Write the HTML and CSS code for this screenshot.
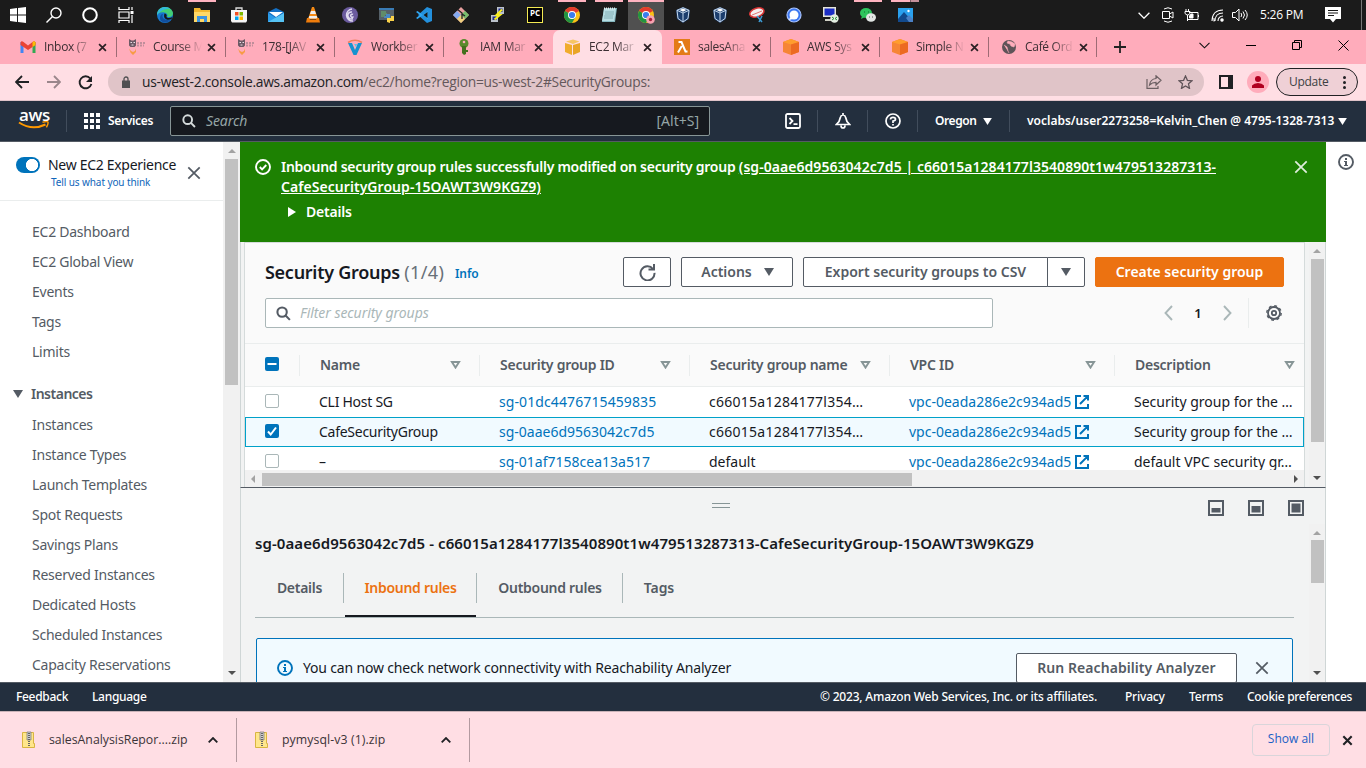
FILE: index.html
```html
<!DOCTYPE html>
<html lang="en">
<head>
<meta charset="utf-8">
<title>EC2 Management Console</title>
<link rel="stylesheet" href="styles.css">
</head>
<body>
<svg class="defs" width="0" height="0">
  <symbol id="x" viewBox="0 0 10 10"><path d="M1.2 1.2l7.6 7.6M8.8 1.2L1.2 8.8" fill="none" stroke="currentColor" stroke-width="1.9"/></symbol>
  <symbol id="close" viewBox="0 0 16 16"><path d="M1.5 1.5l13 13M14.5 1.5l-13 13" fill="none" stroke="currentColor" stroke-width="2"/></symbol>
  <symbol id="down" viewBox="0 0 10 8"><path d="M0 0h10L5 8z" fill="currentColor"/></symbol>
  <symbol id="sort" viewBox="0 0 10 8"><path d="M1.4 1h7.2L5 6.6z" fill="none" stroke="#879596" stroke-width="1.9"/></symbol>
  <symbol id="search" viewBox="0 0 16 16"><circle cx="6.5" cy="6.5" r="5" fill="none" stroke="currentColor" stroke-width="2.200"/><path d="M10.2 10.2l4.6 4.6" stroke="currentColor" stroke-width="2.200"/></symbol>
  <symbol id="ext" viewBox="0 0 14 14"><path d="M6 1H1v12h12V9M8.5 1H13v4.500M12.600 1.400L5 9" fill="none" stroke="#0073bb" stroke-width="2"/></symbol>
  <symbol id="info" viewBox="0 0 16 16"><circle cx="8" cy="8" r="7" fill="none" stroke="currentColor" stroke-width="1.9"/><path d="M7 4h2v2H7zM6 7h3v4h1v1H6v-1h1V8H6z" fill="currentColor"/></symbol>
  <symbol id="chrome" viewBox="0 0 16 16"><circle cx="8" cy="8" r="8" fill="#fbc116"/><path d="M8 8L1.070 4A8 8 0 0 1 14.930 4z" fill="#e33b2e"/><path d="M8 8L1.070 4A8 8 0 0 0 8 16l3.500-6z" fill="#229342"/><circle cx="8" cy="8" r="4" fill="#fff"/><circle cx="8" cy="8" r="3.100" fill="#3b7ded"/></symbol>
  <symbol id="cube" viewBox="0 0 16 16"><path d="M8 0l8 3v10l-8 3-8-3V3z" fill="#f68536"/><path d="M0 3l8 2.500L16 3 8 0z" fill="#ff9d2e"/><path d="M8 5.500L16 3v10l-8 3z" fill="#ec6a22"/></symbol>
  <symbol id="vbox" viewBox="0 0 14 16"><path d="M7 0l7 3-1 9-6 4-6-4-1-9z" fill="#1c3e6e"/><path d="M1 3.300l6 2.700 6-2.700M7 6v9M7 .7l6 2.600-1 8.200-5 3.500-5-3.500L1 3.300z" fill="none" stroke="#c5d8ec" stroke-width="1"/><path d="M3.500 3L7 1.500 10.500 3 7 4.700z" fill="#fff"/></symbol>
  <symbol id="cat" viewBox="0 0 16 16"><path d="M0 0l2.500 1.500h2L7 0v6.500L5.500 8h-4L0 6.500z" fill="#6d5a66"/><path d="M8 4h8M8 6.500h7" stroke="#c08d9a" stroke-width="2" stroke-dasharray="2 1"/><path d="M0 9.500l1.500 4L4 16l3-3V9.500l-1 2.500-2 1-2-1z" fill="#f79b45"/><path d="M1.500 3.500h1.500M4.500 3.500H6M2.500 6h2" stroke="#e9dfe4"/></symbol>
  <symbol id="zip" viewBox="0 0 14 18"><path d="M.5 1.500h11v11h1v4H.5z" fill="#ffe68c" stroke="#d9b541"/><path d="M5 1h4v8H5z" fill="#ccc" stroke="#777" stroke-width=".7"/><path d="M7 2v14" stroke="#666" stroke-width="2" stroke-dasharray="1 1"/></symbol>
  <symbol id="up" viewBox="0 0 10 6"><path d="M.7 5.300L5 1l4.300 4.300" fill="none" stroke="currentColor" stroke-width="1.800"/></symbol>
</svg>

<div class="taskbar">
  <div class="sys"><svg width="16" height="16" viewBox="0 0 16 16"><path fill="#fff" d="M0 2l7-1v6.500H0zM8 1l8-1v7.500H8zM0 8.500h7V15l-7-1zM8 8.500h8V16l-8-1z"/></svg></div>
  <div class="sys"><svg width="16" height="16" viewBox="0 0 16 16" fill="none" stroke="#fff" stroke-width="1.400"><circle cx="10" cy="6" r="5"/><path d="M6.500 9.500L.5 15.500"/></svg></div>
  <div class="sys"><svg width="16" height="16" viewBox="0 0 16 16"><circle cx="8" cy="8" r="6.800" fill="none" stroke="#fff" stroke-width="2"/></svg></div>
  <div class="sys"><svg width="16" height="16" viewBox="0 0 16 16" fill="none" stroke="#fff" stroke-width="1.200"><path d="M1 0v2.500h10V0M1 5h10v6H1zM1 16v-2.500h10V16M14 0v3M14 8v8"/><path d="M12.500 5.500h3" stroke-width="3"/></svg></div>
  <div class="app first"><svg width="16" height="16" viewBox="0 0 16 16"><circle cx="8" cy="8" r="8" fill="#1678cf"/><path d="M0 7C1 1 5 0 8 0c5 0 8 3.500 8 6.500 0 3-3 4-6 3.500 1-1 1-4-3-4.500C4 5 1 6 0 8z" fill="#42ce76"/><path d="M0 7C1 2 5 0 8 0c2 0 4 .7 5.300 2C9 1 4 3 0 8z" fill="#32b8dd"/><path d="M6 7c-2 4 2 7 8 6-4 4-11 3-11-2 0-2 1-4 3-4z" fill="#124f9e"/><path d="M7.500 6.500c3 .5 2 3 2 3.500 1 1.500 4 1 6 0l-1 2c-4 2-9 0-7-5.500z" fill="#171717"/></svg></div>
  <div class="app lit"><svg width="16" height="14" viewBox="0 0 16 14"><path d="M0 0h6l1 2h9v12H0z" fill="#f3b72f"/><path d="M0 4h16v10H0z" fill="#ffd867"/><path d="M3 14V8h10v6h-3v-3H6v3z" fill="#3d94df"/></svg></div>
  <div class="app"><svg width="16" height="16" viewBox="0 0 16 16"><path d="M5 4V1h6v3" fill="none" stroke="#ddd" stroke-width="1.300"/><path d="M0 3h16v11l-1 1.500H1L0 14z" fill="#f5f5f5"/><path d="M4 5h3.500v3.500H4z" fill="#f25022"/><path d="M8.500 5H12v3.500H8.500z" fill="#7fba00"/><path d="M4 9.500h3.500V13H4z" fill="#00a4ef"/><path d="M8.500 9.500H12V13H8.500z" fill="#ffb900"/></svg></div>
  <div class="app"><svg width="16" height="14" viewBox="0 0 16 14"><path d="M0 4l8-4 8 4v10H0z" fill="#1570c4"/><path d="M1 4h14L8 9z" fill="#fff"/><path d="M0 5l8 5 8-5v9H0z" fill="#2b9be8"/><path d="M0 14l16-9v9z" fill="#56c3f4"/></svg></div>
  <div class="app"><svg width="14" height="16" viewBox="0 0 14 16"><path d="M6 0h2l4 12H2z" fill="#f58a14"/><path d="M5 4h4l1 3H4zM3.300 9h7.400l.8 2.500h-9z" fill="#eee"/><path d="M1 11h2l1 1.500h6l1-1.500h2l1 4.500H0z" fill="#ef7d0c"/></svg></div>
  <div class="app"><svg width="16" height="16" viewBox="0 0 16 16"><circle cx="8" cy="8" r="8" fill="#6b5b9e"/><path d="M10 2A6 6 0 1 0 11 14M10 5a3.500 3.500 0 1 0 1 6.500M11 7.500a1.500 1.500 0 1 0 .5 2" fill="none" stroke="#e0dcef" stroke-width="1.500"/></svg></div>
  <div class="app"><svg width="16" height="16" viewBox="0 0 16 16"><path d="M0 1h15v12H0z" fill="#566169"/><path d="M0 1h15v2H0z" fill="#3a7cb5"/><path d="M2 5h5M2 7h6M2 9h4" stroke="#6db86a"/><path d="M7 7h4v4H5c0-2 1-2 2-2z" fill="#4888c2"/><path d="M15 9v5h-4v2l-3-1v-4h4V9z" fill="#fbd249"/></svg></div>
  <div class="app"><svg width="16" height="16" viewBox="0 0 16 16"><path d="M11 0l5 2v12l-5 2-9-8z" fill="#2390dc"/><path d="M0 5l1.500-1L12 12v-8L1.500 12 0 11l4-3z" fill="#31a8f5"/><path d="M11.500 5v6L7.500 8z" fill="#171717"/></svg></div>
  <div class="app"><svg width="16" height="16" viewBox="0 0 16 16"><path d="M8 0l8 8-8 8-8-8z" fill="#e8a0a0"/><path d="M0 8l4-4 4 4-4 4z" fill="#84a9ee"/><path d="M8 8l4-4 4 4-4 4z" fill="#77bd6c"/><path d="M4 12l4-4 4 4-4 4z" fill="#efcf7e"/><path d="M4 2l5 4v6M9 7l3 2" stroke="#222" fill="none" stroke-width="1.300"/></svg></div>
  <div class="app"><svg width="16" height="16" viewBox="0 0 16 16"><path d="M7 0h7v7H7zM1 8h7v7H1z" fill="#bcc3cc"/><path d="M8.500 1.500h4v3.500h-4zM2.500 9.500h4V13h-4z" fill="#222d8f"/><path d="M12 2.500L6.500 8H10l-5.500 4.500" fill="none" stroke="#f8ee1e" stroke-width="2"/></svg></div>
  <div class="app"><div class="pc">PC</div></div>
  <div class="app lit"><svg width="16" height="16"><use href="#chrome"/></svg></div>
  <div class="app lit"><svg width="16" height="16" viewBox="0 0 16 16"><path d="M3 1h13l-2 14H1z" fill="#86b7bf"/><path d="M3 2h12l-2 12H1z" fill="#b7dde2"/><path d="M4 5h9M4 7h9M3 9h9M3 11h9" stroke="#77a5ac" stroke-width=".8"/><path d="M3 1.500h12" stroke="#e9e9e9" stroke-width="2" stroke-dasharray="1 1"/></svg></div>
  <div class="app lit current"><svg width="17" height="17" viewBox="0 0 17 17"><use href="#chrome" width="16" height="16"/><circle cx="12.500" cy="12.500" r="4.300" fill="#f7a2b0"/><circle cx="12.500" cy="12.500" r="1.700" fill="#a81c3b"/></svg></div>
  <div class="app"><svg width="14" height="16"><use href="#vbox"/></svg></div>
  <div class="app"><svg width="14" height="16"><use href="#vbox"/></svg></div>
  <div class="app"><svg width="16" height="16" viewBox="0 0 16 16"><ellipse cx="8" cy="5.500" rx="7.300" ry="4.300" transform="rotate(-18 8 6)" fill="#f4f0f0" stroke="#d93636" stroke-width="1.500"/><path d="M3 8l10-4" stroke="#e27171"/><path d="M8 9l5 6M13 9l-3 6" stroke="#3d9bd4" stroke-width="1.500"/></svg></div>
  <div class="app"><svg width="16" height="16" viewBox="0 0 16 16"><circle cx="8" cy="8" r="7" fill="#3a76f0" stroke="#a9c4ff" stroke-width="1.200"/><circle cx="8" cy="8" r="4.500" fill="#fff"/><path d="M4 10l-1 3 4-1z" fill="#fff"/></svg></div>
  <div class="app"><svg width="16" height="16" viewBox="0 0 16 16"><path d="M0 0h13v10H0z" fill="#e6e6da"/><path d="M1.500 1.500h10v7h-10z" fill="#1c2ec5"/><path d="M2 12h8v2H2z" fill="#d0d0c4"/><circle cx="11.500" cy="11.500" r="4.200" fill="#e5eee2"/><path d="M9 10l2 1.500L9 13M14 10l-2 1.500 2 1.500" stroke="#23903c" fill="none"/></svg></div>
  <div class="app lit"><svg width="16" height="16" viewBox="0 0 16 16"><ellipse cx="6" cy="6" rx="6" ry="5" fill="#2dc45c"/><path d="M2 9l-1 3 4-2z" fill="#2dc45c"/><ellipse cx="11" cy="10.500" rx="5" ry="4.200" fill="#e2e6e4"/><path d="M4 5h1M8 5h1" stroke="#17652f"/><path d="M9 10h1M12 10h1" stroke="#555"/></svg></div>
  <div class="app lit stacked"><svg width="15" height="14" viewBox="0 0 15 14"><path d="M0 0h15v14H0z" fill="#2aa0ee"/><path d="M0 11l6-7 9 10H0z" fill="#124a8d"/><path d="M8 10l3-3 4 4v3h-4z" fill="#4a80c5"/><circle cx="10.500" cy="3" r="1.200" fill="#fff"/></svg></div>
  <div class="tray">
    <svg width="12" height="7" viewBox="0 0 12 7"><path d="M.6.8L6 6.200 11.400.8" fill="none" stroke="#fff" stroke-width="1.300"/></svg>
    <svg width="12" height="16" viewBox="0 0 12 16" fill="none" stroke="#fff"><path d="M2 2Q6-.5 10 2M2 14q4 2.500 8 0M.5 4.500h7v7h-7zM7.500 7l3.500-2v6L7.500 9"/></svg>
    <svg width="16" height="13" viewBox="0 0 16 13" fill="none" stroke="#fff"><path d="M5 3.500h9v7H3.500V8M14.500 6v2M2 0v2M4.500 0v2M1 2.500h5v2L4 6H3L1 4.500zM3.500 6v6"/><path d="M7 5h2v4H5.500V7z" fill="#fff"/></svg>
    <svg width="13" height="13" viewBox="0 0 13 13" fill="none" stroke="#fff" stroke-width="1.100"><path d="M1 12C1 5 5 1 12 1M4 12c0-5 3-8 8-8M7 12c0-3 2-5 5-5M3 12.500V9"/><circle cx="11" cy="11" r="1.200" fill="#fff"/></svg>
    <svg width="16" height="14" viewBox="0 0 16 14" fill="none" stroke="#fff"><path d="M.5 4.500h3L7 1v12L3.500 9.500h-3zM9 5q1.500 2 0 4M11 3.500q3 3.500 0 7M13 2q4.500 5 0 10"/></svg>
    <span class="clock">5:26 PM</span>
    <svg width="16" height="16" viewBox="0 0 16 16"><path d="M0 0h16v12h-5l-3 3.500L5 12H0z" fill="#fff"/><path d="M3 3.500h10M3 6h10M3 8.500h6" stroke="#171717"/></svg>
  </div>
</div>

<div class="tabstrip">
  <div class="tab"><svg class="fav" width="15" height="12" viewBox="0 0 15 12"><path d="M0 1l3 1v10H0z" fill="#4285f4"/><path d="M12 2l3-1v11h-3z" fill="#34a853"/><path d="M0 1.500Q1-.5 3 1l4.500 3.600L12 1q2-1.500 3 .5V4L7.500 9 0 4z" fill="#ea4335"/><path d="M12 1q2-1.500 3 .5V4l-3 2z" fill="#fbbc04"/></svg><span class="label">Inbox (7</span><svg class="tx"><use href="#x"/></svg></div>
  <div class="tab"><svg class="fav" width="16" height="16"><use href="#cat"/></svg><span class="label">Course M</span><svg class="tx"><use href="#x"/></svg></div>
  <div class="tab"><svg class="fav" width="16" height="16"><use href="#cat"/></svg><span class="label">178-[JAV</span><svg class="tx"><use href="#x"/></svg></div>
  <div class="tab"><svg class="fav" width="16" height="16" viewBox="0 0 16 16"><path d="M1 4h4l3 7 3-7h4L9.500 16h-3z" fill="#1793cf"/><path d="M1 3.500Q8-1 15 3.500" fill="none" stroke="#f08060" stroke-width="1.500"/><path d="M7 5h3l-1 3z" fill="#56c5ec"/></svg><span class="label">Workber</span><svg class="tx"><use href="#x"/></svg></div>
  <div class="tab"><svg class="fav" width="16" height="16" viewBox="0 0 16 16"><circle cx="8" cy="4.500" r="4.500" fill="#5b8a2c"/><path d="M6 7h4v8l-2 1-2-2z" fill="#45701f"/><path d="M10 11h2v2h-2z" fill="#45701f"/><circle cx="8" cy="3" r="1.300" fill="#ffacbb"/></svg><span class="label">IAM Mar</span><svg class="tx"><use href="#x"/></svg></div>
  <div class="tab active"><svg class="fav" width="16" height="16" viewBox="0 0 16 16"><path d="M0 4l7 2v10l-7-3z" fill="#f0ac2c"/><path d="M8 6l7-2v9l-7 3z" fill="#e9a526"/><path d="M1 2.500L8 .5l6.500 2L8 5z" fill="#f6c664"/></svg><span class="label">EC2 Mar</span><svg class="tx"><use href="#x"/></svg></div>
  <div class="tab"><svg class="fav" width="16" height="16" viewBox="0 0 16 16"><path d="M0 0h16v16H0z" fill="#e47b17"/><path d="M4.500 3h3l4 9.500h2M7.800 7L4 13.500" fill="none" stroke="#fff" stroke-width="2"/></svg><span class="label">salesAna</span><svg class="tx"><use href="#x"/></svg></div>
  <div class="tab"><svg class="fav" width="16" height="16"><use href="#cube"/></svg><span class="label">AWS Sys</span><svg class="tx"><use href="#x"/></svg></div>
  <div class="tab"><svg class="fav" width="16" height="16"><use href="#cube"/></svg><span class="label">Simple N</span><svg class="tx"><use href="#x"/></svg></div>
  <div class="tab"><svg class="fav" width="14" height="14" viewBox="0 0 14 14"><circle cx="7" cy="7" r="7" fill="#5f5358"/><path d="M2 5l3 2 1 4 1 2M6 1l-1 2 3 1 1 2 3 1 1-3-3-2z" fill="#ffacbb" stroke="#ffacbb" stroke-width=".6"/></svg><span class="label">Café Ord</span><svg class="tx"><use href="#x"/></svg></div>
  <svg class="plus" width="12" height="12" viewBox="0 0 12 12"><path d="M6 0v12M0 6h12" stroke="#222" stroke-width="1.800"/></svg>
  <div class="winctl">
    <svg width="11" height="7" viewBox="0 0 11 7"><path d="M.5.8l5 5 5-5" fill="none" stroke="#111" stroke-width="1.100"/></svg>
    <svg width="10" height="10" viewBox="0 0 10 10"><path d="M0 5.500h10" stroke="#000"/></svg>
    <svg width="10" height="10" viewBox="0 0 10 10"><path d="M.5 2.500h7v7h-7zM2.500 2.500v-2h7v7h-2" fill="none" stroke="#000"/></svg>
    <svg width="11" height="11" viewBox="0 0 11 11"><path d="M.5.5l10 10M10.500.5l-10 10" stroke="#000"/></svg>
  </div>
</div>

<div class="toolbar">
  <svg width="14" height="14" viewBox="0 0 14 14" fill="none" stroke="#202124" stroke-width="1.800"><path d="M14 7H1.500M7 1L1 7l6 6"/></svg>
  <svg width="14" height="14" viewBox="0 0 14 14" fill="none" stroke="#9a868b" stroke-width="1.800"><path d="M0 7h12.500M7 1l6 6-6 6"/></svg>
  <svg width="15" height="15" viewBox="0 0 15 15"><path d="M12.300 3.500A6 6 0 1 0 13.400 9" fill="none" stroke="#202124" stroke-width="1.900"/><path d="M14 1v6H8z" fill="#202124"/></svg>
  <div class="omnibox">
    <svg width="8" height="12" viewBox="0 0 8 12"><path d="M0 4.500h8V12H0z" fill="#505052"/><path d="M2 5V3a2 2 0 0 1 4 0v2" fill="none" stroke="#505052" stroke-width="1.300"/></svg>
    <span class="url"><span class="host">us-west-2.console.aws.amazon.com</span><span class="path">/ec2/home?region=us-west-2#SecurityGroups:</span></span>
    <svg class="share" width="16" height="14" viewBox="0 0 16 14" fill="none" stroke="#6b5f62" stroke-width="1.200"><path d="M1 4v9.400h11V11M10 .8V3.500C6 4 4 6 3.500 10c2-2 4-2.600 6.500-2.600V10l5-4.700z"/></svg>
    <svg width="15" height="14" viewBox="0 0 15 14"><path d="M7.500 1l1.900 4.300 4.600.5-3.500 3 1 4.600-4-2.400-4 2.400 1-4.600L1 5.800l4.600-.5z" fill="none" stroke="#5f5358" stroke-width="1.300"/></svg>
  </div>
  <svg class="sidebtn" width="14" height="14" viewBox="0 0 14 14"><path d="M0 0h14v14H0zM2 2v10h7V2z" fill="#202124" fill-rule="evenodd"/></svg>
  <div class="avatar"><svg width="12" height="12" viewBox="0 0 12 12"><circle cx="6" cy="3" r="3" fill="#b00020"/><path d="M0 12V9.500Q2 7 6 7t6 2.500V12z" fill="#b00020"/></svg></div>
  <div class="update"><span>Update</span><svg width="3" height="13" viewBox="0 0 3 13" fill="#202124"><circle cx="1.500" cy="1.500" r="1.500"/><circle cx="1.500" cy="6.500" r="1.500"/><circle cx="1.500" cy="11.500" r="1.500"/></svg></div>
</div>

<div class="awsbar">
  <div class="logo"><span>aws</span><svg width="32" height="9" viewBox="0 0 32 9"><path d="M1 1.500Q14 10 27.500 3.500" fill="none" stroke="#f90" stroke-width="2"/><path d="M24.500 1.300q5-1.300 5.500 0t-1.600 5" fill="none" stroke="#f90" stroke-width="1.500"/></svg></div>
  <div class="services"><svg width="16" height="16" viewBox="0 0 16 16" fill="#fff"><path d="M0 0h4v4H0zM6 0h4v4H6zM12 0h4v4h-4zM0 6h4v4H0zM6 6h4v4H6zM12 6h4v4h-4zM0 12h4v4H0zM6 12h4v4H6zM12 12h4v4h-4z"/></svg><span>Services</span></div>
  <div class="gsearch"><svg width="14" height="14" color="#d5dbdb"><use href="#search"/></svg><em>Search</em><span class="kbd">[Alt+S]</span></div>
  <div class="gicon term"><svg width="16" height="16" viewBox="0 0 16 16" fill="none" stroke="#fff" stroke-width="1.800"><rect x="1" y="1" width="14" height="14" rx="1.500"/><path d="M4.500 5l3 3-3 3M8.500 11.200h4"/></svg></div>
  <div class="gicon"><svg width="16" height="16" viewBox="0 0 16 16" fill="none" stroke="#fff" stroke-width="1.700"><path d="M8 0v2M1.300 11.500L4 8.500 5.500 4Q6 2 8 2t2.500 2L12 8.500l2.700 3zM6 12.500Q6 15 8 15t2-2.500"/></svg></div>
  <div class="gicon"><svg width="16" height="16" viewBox="0 0 16 16" fill="none" stroke="#fff" stroke-width="1.700"><circle cx="8" cy="8" r="7"/><path d="M5.500 6.500Q5.500 4.300 8 4.300t2.500 2Q10.500 7.800 8 8v2M8 11v1.500"/></svg></div>
  <div class="region"><span>Oregon</span><svg width="9" height="7"><use href="#down"/></svg></div>
  <div class="account"><span>voclabs/user2273258=Kelvin_Chen @ 4795-1328-7313</span><svg width="9" height="7"><use href="#down"/></svg></div>
</div>

<div class="main">
  <aside class="side">
    <div class="sidehead">
      <span class="toggle"></span>
      <div class="newexp"><div class="t1">New EC2 Experience</div><a>Tell us what you think</a></div>
      <svg class="sx" width="14" height="14" color="#545b64"><use href="#close"/></svg>
    </div>
    <nav>
      <a>EC2 Dashboard</a><a>EC2 Global View</a><a>Events</a><a>Tags</a><a>Limits</a>
      <div class="group"><svg width="10" height="8" color="#545b64"><use href="#down"/></svg><b>Instances</b></div>
      <a>Instances</a><a>Instance Types</a><a>Launch Templates</a><a>Spot Requests</a><a>Savings Plans</a><a>Reserved Instances</a><a>Dedicated Hosts</a><a>Scheduled Instances</a><a>Capacity Reservations</a>
    </nav>
  </aside>
  <div class="vbar sidebar-scroll"><i class="a-up dim"></i><div class="thumb"></div><i class="a-down"></i></div>

  <section class="work">
    <div class="banner">
      <svg width="16" height="16" viewBox="0 0 16 16" fill="none" stroke="#fff" stroke-width="1.900"><circle cx="8" cy="8" r="7"/><path d="M4.800 8l2.300 2.300 4.200-4.300"/></svg>
      <div class="msg">
        <div class="l1">Inbound security group rules successfully modified on security group <u>(sg-0aae6d9563042c7d5 | c66015a1284177l3540890t1w479513287313-</u></div>
        <div class="l2"><u>CafeSecurityGroup-15OAWT3W9KGZ9)</u></div>
        <div class="det"><svg width="8" height="10" viewBox="0 0 8 10"><path d="M0 0l8 5-8 5z" fill="#fff"/></svg><span>Details</span></div>
      </div>
      <svg class="bx" width="14" height="14" color="#dfeedd"><use href="#close"/></svg>
    </div>

    <div class="listpane">
      <div class="card">
        <div class="actions">
          <h1>Security Groups <span>(1/4)</span></h1><a class="infolink">Info</a>
          <button class="btn refresh"><svg width="17" height="17" viewBox="0 0 17 17"><path d="M14 5A7 7 0 1 0 15.500 8.800M15 0v5.500H9.500" fill="none" stroke="#545b64" stroke-width="2"/></svg></button>
          <button class="btn act"><span>Actions</span><svg width="10" height="8"><use href="#down"/></svg></button>
          <div class="split"><button class="btn exp"><span>Export security groups to CSV</span></button><button class="btn more"><svg width="10" height="8"><use href="#down"/></svg></button></div>
          <button class="btn primary"><span>Create security group</span></button>
        </div>
        <div class="filterrow">
          <div class="filter"><svg width="15" height="15" color="#545b64"><use href="#search"/></svg><em>Filter security groups</em></div>
          <div class="pager">
            <svg width="9" height="16" viewBox="0 0 9 16"><path d="M8 1L1.500 8 8 15" fill="none" stroke="#aab7b8" stroke-width="1.900"/></svg><b>1</b><svg width="9" height="16" viewBox="0 0 9 16"><path d="M1 1l6.500 7L1 15" fill="none" stroke="#aab7b8" stroke-width="1.900"/></svg>
          </div>
          <div class="gear"><svg width="16" height="16" viewBox="0 0 16 16" fill="none" stroke="#545b64"><circle cx="8" cy="8" r="6" stroke-width="1.800"/><circle cx="8" cy="8" r="7.200" stroke-width="1.400" stroke-dasharray="2.830 2.830"/><circle cx="8" cy="8" r="2.200" stroke-width="1.800"/></svg></div>
        </div>
        <div class="row head">
          <div class="c"><span class="ck on"><svg width="14" height="14" viewBox="0 0 14 14"><path d="M2.500 7h9" stroke="#fff" stroke-width="2"/></svg></span></div>
          <div class="c"><b>Name</b><svg width="11" height="8"><use href="#sort"/></svg></div>
          <div class="c"><b>Security group ID</b><svg width="11" height="8"><use href="#sort"/></svg></div>
          <div class="c"><b>Security group name</b><svg width="11" height="8"><use href="#sort"/></svg></div>
          <div class="c"><b>VPC ID</b><svg width="11" height="8"><use href="#sort"/></svg></div>
          <div class="c"><b>Description</b><svg width="11" height="8"><use href="#sort"/></svg></div>
        </div>
        <div class="row"><div class="c"><span class="ck"></span></div><div class="c nm">CLI Host SG</div><div class="c"><a class="id sg">sg-01dc4476715459835</a></div><div class="c gn">c66015a1284177l354…</div><div class="c"><a class="id">vpc-0eada286e2c934ad5</a><svg class="ext" width="14" height="14"><use href="#ext"/></svg></div><div class="c">Security group for the …</div></div>
        <div class="row sel"><div class="c"><span class="ck on"><svg width="14" height="14" viewBox="0 0 14 14"><path d="M3 7.500l2.700 3L11 3.500" fill="none" stroke="#fff" stroke-width="2"/></svg></span></div><div class="c nm">CafeSecurityGroup</div><div class="c"><a class="id">sg-0aae6d9563042c7d5</a></div><div class="c gn">c66015a1284177l354…</div><div class="c"><a class="id">vpc-0eada286e2c934ad5</a><svg class="ext" width="14" height="14"><use href="#ext"/></svg></div><div class="c">Security group for the …</div></div>
        <div class="row"><div class="c"><span class="ck"></span></div><div class="c nm">–</div><div class="c"><a class="id">sg-01af7158cea13a517</a></div><div class="c">default</div><div class="c"><a class="id">vpc-0eada286e2c934ad5</a><svg class="ext" width="14" height="14"><use href="#ext"/></svg></div><div class="c">default VPC security gr…</div></div>
        <div class="hbar"><i class="a-left"></i><div class="hthumb"></div><i class="a-right"></i></div>
      </div>
      <div class="vbar list-scroll"><i class="a-up dim"></i><div class="thumb"></div><i class="a-down"></i></div>
    </div>

    <div class="detail">
      <div class="grip">
        <span class="handle"></span>
        <div class="sizes">
          <svg width="16" height="16" viewBox="0 0 16 16"><path d="M1 1h14v14H1z" fill="none" stroke="#545b64" stroke-width="2"/><path d="M3.500 8h9v4.500h-9z" fill="#545b64"/></svg>
          <svg width="16" height="16" viewBox="0 0 16 16"><path d="M1 1h14v14H1z" fill="none" stroke="#545b64" stroke-width="2"/><path d="M3.500 6h9v6.500h-9z" fill="#545b64"/></svg>
          <svg width="16" height="16" viewBox="0 0 16 16"><path d="M1 1h14v14H1z" fill="none" stroke="#545b64" stroke-width="2"/><path d="M3.500 3.500h9v9h-9z" fill="#545b64"/></svg>
        </div>
      </div>
      <div class="dbody">
        <div class="dcontent">
          <h2>sg-0aae6d9563042c7d5 - c66015a1284177l3540890t1w479513287313-CafeSecurityGroup-15OAWT3W9KGZ9</h2>
          <div class="dtabs"><div class="dt d1"><span>Details</span></div><div class="dt d2 on"><span>Inbound rules</span></div><div class="dt d3"><span>Outbound rules</span></div><div class="dt d4"><span>Tags</span></div></div>
          <div class="alert">
            <svg width="16" height="16" color="#0073bb"><use href="#info"/></svg>
            <span class="amsg">You can now check network connectivity with Reachability Analyzer</span>
            <button class="btn run"><span>Run Reachability Analyzer</span></button>
            <svg class="ax" width="14" height="14" color="#545b64"><use href="#close"/></svg>
          </div>
        </div>
        <div class="vbar detail-scroll"><i class="a-up dim"></i><div class="thumb"></div><i class="a-down"></i></div>
      </div>
    </div>
  </section>
  <aside class="help"><svg width="16" height="16" color="#545b64"><use href="#info"/></svg></aside>
</div>

<footer class="foot">
  <span class="f1">Feedback</span><span class="f2">Language</span>
  <span class="f3">© 2023, Amazon Web Services, Inc. or its affiliates.</span><span class="f4">Privacy</span><span class="f5">Terms</span><span class="f6">Cookie preferences</span>
</footer>

<div class="downloads">
  <div class="dl one"><svg width="14" height="18"><use href="#zip"/></svg><span>salesAnalysisRepor....zip</span><svg class="cv" width="10" height="6"><use href="#up"/></svg></div>
  <div class="dl two"><svg width="14" height="18"><use href="#zip"/></svg><span>pymysql-v3 (1).zip</span><svg class="cv" width="10" height="6"><use href="#up"/></svg></div>
  <div class="showall">Show all</div>
  <svg class="dx" width="11" height="11" color="#202124"><use href="#x"/></svg>
</div>
</body>
</html>
```
FILE: styles.css
```css
* { box-sizing: border-box; }
html, body { margin: 0; width: 1366px; height: 768px; overflow: hidden; }
body { display: flex; flex-direction: column; font: 14px/20px "Noto Sans", "Open Sans", sans-serif; color: #16191f; white-space: nowrap; }
svg { flex: none; display: block; }
button { font: inherit; padding: 0; margin: 0; }
h1, h2 { margin: 0; }
.defs { display: none; }

/* Windows taskbar */
.taskbar { height: 30px; background: #1b1b1b; display: flex; flex: none; }
.sys { width: 36px; display: grid; place-items: center; }
.app { width: 37px; display: grid; place-items: center; padding-right: 1px; background: no-repeat 4px 0 / 28px 2px; }
.app.first { margin-left: 3px; }
.app.lit { background-image: linear-gradient(#ffb3c0, #ffb3c0); }
.app.stacked { background-image: linear-gradient(90deg, #ffb3c0 19px, #7a5a60 19px, #7a5a60 20px, #c58f99 20px); }
.app.current { background-color: #505050; background-size: 36px 2px; background-position: 0 0; width: 36px; margin-right: 1px; padding-right: 0; }
.pc { width: 16px; height: 16px; border: 1px solid #f4ea52; background: #000; color: #fff; font: bold 8px/10px "Open Sans", sans-serif; text-align: center; }
.tray { margin-left: auto; margin-right: 4px; width: 224px; display: flex; align-items: center; border-right: 1px solid #777; }
.tray svg:nth-of-type(2) { margin-left: 12px; }
.tray svg:nth-of-type(3) { margin-left: 10px; }
.tray svg:nth-of-type(4) { margin-left: 11px; }
.tray svg:nth-of-type(5) { margin-left: 8px; }
.clock { color: #fff; font: 12px/16px "Open Sans", sans-serif; margin-left: 12px; width: 44px; letter-spacing: -.2px; }
.tray svg:nth-of-type(6) { margin-left: 21px; }

/* Browser tabs */
.tabstrip { height: 34px; background: #ffacbb; display: flex; flex: none; padding-left: 8px; align-items: center; font: 12px/16px "Open Sans", sans-serif; color: #3c2e33; }
.tab { width: 109px; height: 34px; display: flex; align-items: center; padding-left: 12px; flex: none; }
.tab:nth-child(10) { width: 108px; }
.tab::after { content: ""; width: 1px; height: 20px; background: #9e6b75; margin-left: auto; }
.tab.active::after, .tab:nth-child(5)::after { background: none; }
.fav { width: 16px; }
.label { width: 50px; margin: 0 4px 0 8px; overflow: hidden; letter-spacing: -.3px; -webkit-mask-image: linear-gradient(90deg, #000 55%, transparent 98%); mask-image: linear-gradient(90deg, #000 55%, transparent 98%); }
.tx { width: 9px; height: 9px; color: #2b2024; }
.tab.active { background: #ffdee4; border-radius: 7px 7px 0 0; }
.plus { margin-left: 17px; }
.winctl { margin-left: auto; display: flex; align-items: center; gap: 36px; padding-right: 17px; margin-top: -4px; }

/* Browser toolbar */
.toolbar { height: 37px; background: #ffdee4; border-bottom: 1px solid #dfc3c9; display: flex; flex: none; align-items: center; padding-left: 15px; font: 12px/16px "Open Sans", sans-serif; }
.toolbar > svg { margin-right: 18px; }
.toolbar > svg:nth-child(3) { margin: 0 15px 0 -1px; }
.omnibox { width: 1096px; height: 28px; border-radius: 14px; background: #e0c4c8; display: flex; align-items: center; padding: 0 11px 0 14px; }
.url { margin-left: 12px; font: 13.800px/20px "Open Sans", sans-serif; letter-spacing: -.26px; }
.host { color: #202124; }
.path { color: #64585b; }
.share { margin-left: auto; margin-right: 16px; }
.toolbar > .sidebtn { margin: 0 14px 0 15px; }
.avatar { width: 22px; height: 22px; border-radius: 50%; background: #ffacbb; display: grid; place-items: center; }
.update { margin-left: 7px; width: 82px; height: 28px; border: 1px solid #202124; border-radius: 14px; background: #efd0d6; display: flex; align-items: center; padding-left: 12px; color: #3c4043; }
.update span { width: 54px; letter-spacing: -.3px; }

/* AWS navigation */
.awsbar { height: 41px; background: #232f3e; border-bottom: 1px solid #545b64; display: flex; flex: none; align-items: center; color: #fff; font-size: 12px; font-weight: 600; }
.logo { width: 67px; height: 22px; border-right: 1px solid #414d5c; padding-left: 18px; }
.logo span { display: block; font: 600 17px/11px "Open Sans", sans-serif; letter-spacing: -.3px; padding-left: 1px; margin-top: -1px; }
.logo svg { margin-top: 1px; }
.services { width: 103px; display: flex; align-items: center; padding-left: 17px; gap: 8px; letter-spacing: -.35px; }
.gsearch { width: 540px; height: 30px; border: 1px solid #879596; border-radius: 2px; background: #16191f; display: flex; align-items: center; padding: 0 10px 0 11px; color: #95a5a6; font-size: 14px; font-weight: 400; }
.gsearch em { margin-left: 10px; letter-spacing: -.1px; }
.kbd { margin-left: auto; font-size: 14px; }
.gicon { width: 50px; height: 22px; border-right: 1px solid #414d5c; display: grid; place-items: center; }
.gicon:nth-child(n+5) { width: 50px; }
.gicon.term { margin-left: 58px; }
.region { width: 92px; height: 22px; border-right: 1px solid #414d5c; display: flex; align-items: center; padding-left: 17px; letter-spacing: -.4px; }
.region svg { margin-left: 6px; }
.region span { width: 42px; }
.account { display: flex; align-items: center; padding-left: 17px; }
.account svg { margin-left: 4px; }

/* Main area */
.main { height: 540px; display: flex; flex: none; }
.side { width: 223px; background: #fff; overflow: hidden; }
.sidehead { height: 59px; border-bottom: 1px solid #eaeded; display: flex; padding-left: 16px; }
.toggle { width: 24px; height: 16px; margin-top: 15px; border-radius: 8px; background: radial-gradient(circle at 16px 8px, #fff 5.800px, #0073bb 6.400px); }
.newexp { margin-left: 8px; width: 128px; padding-top: 13px; }
.t1 { letter-spacing: -.3px; }
.newexp a { display: block; font-size: 10px; line-height: 14px; padding-left: 3px; color: #0f66ba; letter-spacing: -.1px; }
.sx { margin: 24px 0 0 11px; }
nav { padding-top: 16px; letter-spacing: -.25px; }
nav a { display: block; height: 30px; line-height: 30px; padding-left: 32px; color: #545b64; }
.group { height: 30px; margin: 12px 0 1px; display: flex; align-items: center; padding-left: 13px; color: #545b64; }
.group b { margin-left: 8px; font-weight: 600; letter-spacing: -.5px; }

.vbar { background: #f1f1f1; display: flex; flex-direction: column; align-items: center; }
.thumb { width: 13px; background: #c1c1c1; flex: none; }
.vbar i, .hbar i { width: 0; height: 0; border: 4px solid transparent; flex: none; }
.a-up { border-top: 0 !important; border-bottom-color: #505050 !important; margin: 7px 0 6px; }
.a-up.dim { border-bottom-color: #a3a3a3 !important; }
.a-down { border-bottom: 0 !important; border-top-color: #505050 !important; margin: auto 0 7px; }
.sidebar-scroll { width: 17px; }
.sidebar-scroll .thumb { height: 226px; }

.work { width: 1086px; display: flex; flex-direction: column; }
.banner { height: 100px; background: #1d8102; color: #fff; display: flex; padding: 15px 18px 0 15px; font-weight: 600; }
.banner > svg { margin-top: 2px; }
.msg { margin-left: 10px; letter-spacing: -.26px; }
.msg u { letter-spacing: .05px; }
.l1, .l2 { height: 20px; }
.det { margin-top: 5px; height: 20px; display: flex; align-items: center; padding-left: 7px; gap: 10px; letter-spacing: -.2px; }
.banner > .bx { margin: 3px 0 0 auto; }

.listpane { height: 245px; display: flex; background: #f2f3f3; border: 1px solid #cfd6d6; border-top-width: 0; border-bottom: 0; padding-left: 3px; }
.card { width: 1061px; border: 1px solid #d5dbdb; border-bottom: 0; background: #fff; display: flex; flex-direction: column; overflow: hidden; }
.list-scroll { width: 16px; margin-left: auto; }
.list-scroll .thumb { height: 183px; }
.actions { background: #fafafa; height: 55px; flex: none; display: flex; align-items: center; padding: 3px 20px 0; }
h1 { font: 600 18px/24px "Noto Sans", sans-serif; width: 181px; letter-spacing: -.28px; }
h1 span { font-weight: 400; color: #687078; letter-spacing: .4px; }
.infolink { font-size: 12px; font-weight: 600; color: #0073bb; width: 23px; margin: 3px 0 0 9px; letter-spacing: -.1px; }
.btn { height: 30px; border: 1px solid #545b64; border-radius: 2px; background: #fff; color: #545b64; font-weight: 600; display: flex; align-items: center; justify-content: center; white-space: nowrap; }
.refresh { width: 48px; margin-left: auto; }
.act { width: 112px; margin-left: 10px; gap: 12px; padding-left: 1px; }
.split { display: flex; margin: 0 10px; }
.exp { width: 245px; border-radius: 2px 0 0 2px; }
.more { width: 38px; margin-left: -1px; border-radius: 0 2px 2px 0; }
.primary { width: 189px; background: #ec7211; border-color: #ec7211; color: #fff; }
.filterrow { background: #fafafa; height: 46px; flex: none; display: flex; align-items: flex-start; padding-left: 20px; border-bottom: 1px solid #eaeded; }
.filter { width: 728px; height: 30px; border: 1px solid #aab7b8; border-radius: 2px; background: #fff; display: flex; align-items: center; padding-left: 10px; color: #aab7b8; }
.filter em { margin-left: 9px; letter-spacing: -.05px; }
.pager { width: 91px; height: 30px; margin-left: 171px; display: flex; align-items: center; }
.pager b { width: 50px; text-align: center; font-size: 13px; font-weight: 600; }
.gear { margin-left: -7px; height: 30px; border-left: 1px solid #eaeded; padding: 7px 0 0 17px; }

.row { display: grid; grid-template-columns: 55px 180px 210px 200px 225px 189px; height: 30px; flex: none; background: #fff; }
.row .c { display: flex; align-items: center; padding-left: 19px; overflow: hidden; }
.row .c:first-child { padding: 0 0 2px 20px; }
.row .nm { letter-spacing: -.27px; }
.row .gn { letter-spacing: .26px; }
.row.head { height: 43px; background: #fafafa; border-bottom: 1px solid #eaeded; color: #545b64; }
.row.head .c { padding: 0 19px 0 20px; position: relative; }
.row.head .c svg { margin-left: auto; }
.row.head .c:first-child { padding-bottom: 2px; }
.row.head .c:last-child { padding-right: 9px; }
.row.head .c:not(:last-child)::after { content: ""; position: absolute; right: 0; top: 11px; width: 1px; height: 21px; background: #eaeded; }
.row b { font-weight: 600; letter-spacing: -.25px; }
.row.sel { background: #f1faff; box-shadow: inset 0 0 0 1px #00a1c9; }
.id { color: #0073bb; }
.id.sg { letter-spacing: .1px; }
.ext { margin-left: 4px; }
.ck { width: 14px; height: 14px; border: 1px solid #aab7b8; border-radius: 2px; background: #fff; display: block; }
.ck.on { border: 0; background: #0073bb; }
.hbar { height: 18px; margin-top: -7px; background: #f1f1f1; display: flex; align-items: center; flex: none; position: relative; }
.hbar .a-left { border-left: 0; border-right-color: #a3a3a3; margin: 0 7px 0 6px; }
.hbar .a-right { border-right: 0; border-left-color: #505050; margin: 0 6px 0 auto; }
.hthumb { width: 650px; height: 13px; background: #c1c1c1; }

/* Split panel */
.detail { height: 195px; background: #f2f3f3; border: 1px solid #cfd6d6; border-top: 1px solid #545b64; border-bottom: 0; }
.grip { height: 36px; display: flex; padding: 15px 21px 0 471px; }
.handle { width: 18px; height: 5px; border: 1px solid #879596; border-width: 1px 0; }
.sizes { margin: -3px 0 0 auto; display: flex; gap: 24px; height: 16px; }
.dbody { height: 158px; display: flex; overflow: hidden; }
.dcontent { width: 1053px; padding-left: 14px; overflow: hidden; }
h2 { font: 600 15px/20px "Noto Sans", sans-serif; padding-top: 9px; letter-spacing: .08px; }
.dtabs { height: 64px; margin-top: 1px; padding-top: 19px; border-bottom: 1px solid #aab7b8; display: flex; }
.dt { height: 44px; color: #545b64; font-weight: 600; line-height: 30px; display: flex; justify-content: center; letter-spacing: -.28px; background: linear-gradient(#aab7b8, #aab7b8) no-repeat right 0 / 1px 30px; }
.d1 { width: 89px; }
.d2 { width: 133px; color: #ec7211; position: relative; }
.d2::after { content: ""; position: absolute; left: 1px; right: 1px; bottom: 0; height: 2px; background: #16191f; }
.d3 { width: 146px; }
.d4 { width: 72px; background: none; letter-spacing: -.1px; }
.alert { margin: 20px 1px 0; width: 1037px; height: 60px; border: 1px solid #0073bb; border-radius: 2px; background: #f1faff; display: flex; align-items: center; padding-left: 20px; }
.amsg { margin-left: 10px; letter-spacing: -.17px; }
.run { width: 221px; margin: 0 18px 0 auto; letter-spacing: .06px; }
.ax { margin-right: 23px; }
.detail-scroll { width: 16px; margin-left: auto; }
.detail-scroll .a-up { margin-bottom: 5px; }
.detail-scroll .thumb { height: 43px; }
.help { width: 40px; background: #fff; padding: 12px; }

/* Footer and downloads shelf */
.foot { height: 29px; background: #232f3e; border-top: 1px solid #545b64; color: #fff; display: flex; flex: none; align-items: center; padding-left: 16px; font-size: 12px; font-weight: 500; letter-spacing: -.2px; }
.f1, .f2, .f6 { letter-spacing: -.3px; }
.f1 { width: 51px; }
.f2 { margin-left: 25px; }
.f3 { margin-left: auto; width: 275px; }
.f4 { margin-left: 30px; width: 39px; }
.f5 { margin-left: 25px; width: 33px; }
.f6 { margin: 0 16px 0 25px; width: 103px; }
.downloads { height: 57px; background: #ffdee4; border-top: 1px solid #c9b2b7; display: flex; flex: none; align-items: center; font: 12.300px/18px "Open Sans", sans-serif; color: #3c3437; }
.dl { height: 44px; width: 233px; display: flex; align-items: center; border-right: 1px solid #b39aa0; padding-left: 18px; }
.dl.one { width: 237px; padding-left: 22px; }
.dl span { margin-left: 13px; }
.dl.two span { letter-spacing: .08px; }
.cv { margin: 0 18px 0 auto; color: #202124; }
.showall { margin-left: auto; width: 78px; height: 32px; border: 1px solid #d9d5da; border-radius: 4px; line-height: 28px; text-align: center; font-size: 12px; color: #1a5fc4; }
.dx { margin: 0 13px 0 12px; }
```
